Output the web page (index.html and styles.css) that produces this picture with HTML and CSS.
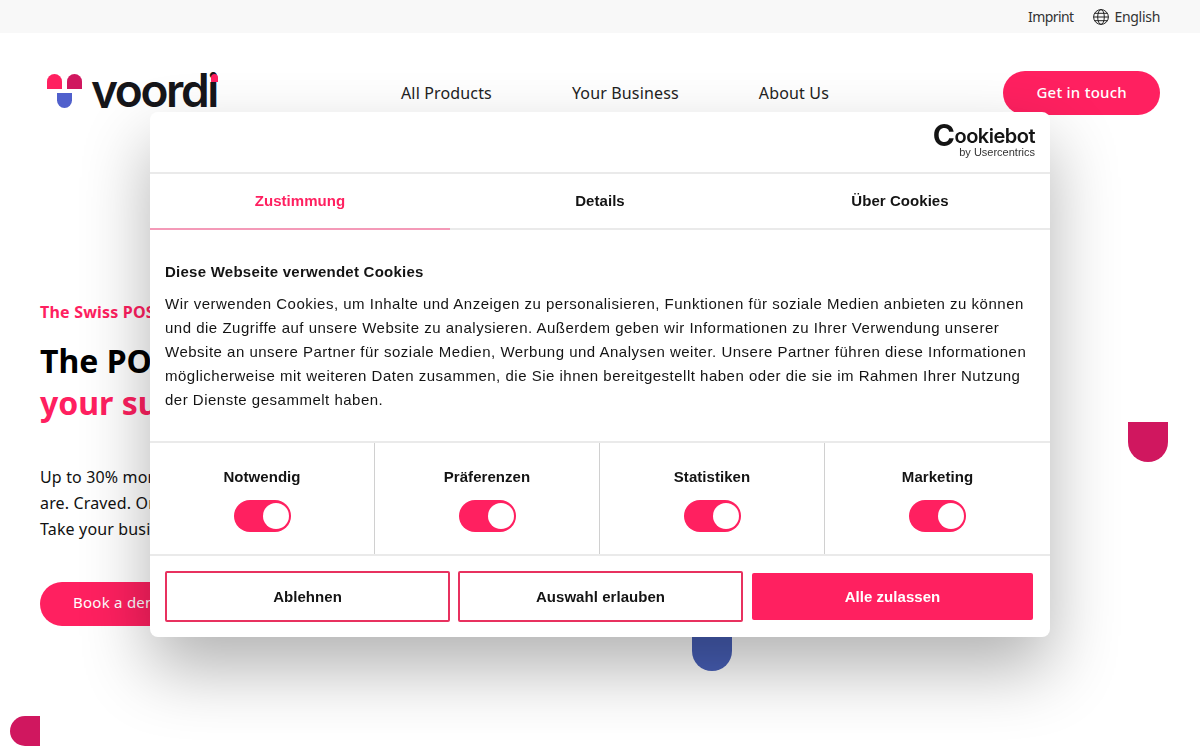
FILE: index.html
```html
<!DOCTYPE html>
<html lang="en">

<head>
    <meta charset="UTF-8">
    <meta name="viewport" content="width=device-width, initial-scale=1.0">
    <title>yoordi</title>
    <link rel="stylesheet" href="styles.css">
</head>

<body>
    <div class="topbar">
        <a class="imprint">Imprint</a>
        <a class="lang">
            <svg class="globe" viewBox="0 0 16 16" width="16" height="16">
                <circle cx="8" cy="8" r="7.4" />
                <ellipse cx="8" cy="8" rx="3.3" ry="7.4" />
                <path d="M.6 8h14.8M1.7 4.3h12.6M1.7 11.7h12.6" />
            </svg>
            English
        </a>
    </div>

    <header class="header">
        <div class="logo">
            <div class="logo-mark">
                <span class="mark mark-left"></span>
                <span class="mark mark-right"></span>
                <span class="mark mark-bottom"></span>
            </div>
            <span class="logo-name">yoordi</span>
            <span class="logo-dot"></span>
        </div>
        <nav class="nav">
            <a>All Products</a>
            <a>Your Business</a>
            <a>About Us</a>
        </nav>
        <a class="btn">Get in touch</a>
    </header>

    <section class="hero">
        <p class="eyebrow">The Swiss POS</p>
        <h1>The POS for<br><span>your success</span></h1>
        <p class="lead">Up to 30% more sales<br>are. Craved. Ordered.<br>Take your business</p>
        <a class="btn btn-demo">Book a demo</a>
    </section>

    <span class="shape shape-right"></span>
    <span class="shape shape-blue"></span>
    <span class="shape shape-corner"></span>

    <div class="dialog">
        <div class="dialog-head">
            <div class="cookiebot">
                <span class="cb-name"><span class="cb-c">C</span>ookiebot</span>
                <span class="cb-by">by Usercentrics</span>
            </div>
        </div>

        <div class="tabs">
            <div class="tab active">Zustimmung</div>
            <div class="tab">Details</div>
            <div class="tab">Über Cookies</div>
        </div>

        <div class="dialog-body">
            <h2>Diese Webseite verwendet Cookies</h2>
            <p>Wir verwenden Cookies, um Inhalte und Anzeigen zu personalisieren, Funktionen für soziale Medien anbieten zu können und die Zugriffe auf unsere Website zu analysieren. Außerdem geben wir Informationen zu Ihrer Verwendung unserer Website an unsere Partner für soziale Medien, Werbung und Analysen weiter. Unsere Partner führen diese Informationen möglicherweise mit weiteren Daten zusammen, die Sie ihnen bereitgestellt haben oder die sie im Rahmen Ihrer Nutzung der Dienste gesammelt haben.</p>
        </div>

        <div class="prefs">
            <div class="pref"><strong>Notwendig</strong><span class="toggle"></span></div>
            <div class="pref"><strong>Präferenzen</strong><span class="toggle"></span></div>
            <div class="pref"><strong>Statistiken</strong><span class="toggle"></span></div>
            <div class="pref"><strong>Marketing</strong><span class="toggle"></span></div>
        </div>

        <div class="actions">
            <button class="outline">Ablehnen</button>
            <button class="outline">Auswahl erlauben</button>
            <button class="solid">Alle zulassen</button>
        </div>
    </div>
</body>

</html>
```

FILE: styles.css
```css
* {
    margin: 0;
    padding: 0;
    box-sizing: border-box;
}

body {
    background: #fff;
    color: #111;
    font-family: "Noto Sans", "Open Sans", sans-serif;
    height: 750px;
    overflow: hidden;
}

.topbar {
    height: 33px;
    background: #f8f8f8;
    display: flex;
    justify-content: flex-end;
    align-items: center;
    gap: 20px;
    padding-right: 40px;
    font-size: 14px;
    letter-spacing: -0.3px;
    color: #333;
}

.imprint {
    letter-spacing: -0.6px;
}

.lang {
    display: flex;
    align-items: center;
    gap: 5px;
}

.globe {
    fill: none;
    stroke: #222;
    stroke-width: 1;
}

.header {
    display: flex;
    align-items: center;
    height: 44px;
    padding: 0 40px 0 47px;
    margin-top: 38px;
}

.logo {
    position: relative;
    display: flex;
    align-items: flex-start;
    width: 171px;
    flex: none;
    height: 34px;
    margin-bottom: 4px;
}

.logo-mark {
    position: relative;
    width: 36px;
    height: 34px;
    flex: none;
}

.mark {
    position: absolute;
    width: 15px;
    height: 15px;
}

.mark-left {
    left: 0;
    top: 0;
    background: #ff2060;
    border-radius: 8px 8px 0 0;
}

.mark-right {
    left: 20px;
    top: 0;
    background: #d0175f;
    border-radius: 8px 8px 0 0;
}

.mark-bottom {
    left: 10px;
    top: 19px;
    background: #5060cc;
    border-radius: 0 0 8px 8px;
}

/* clipped at the baseline: the y of the wordmark has no descender */
.logo-name {
    display: block;
    flex: none;
    height: 40px;
    margin: -6px 0 0 8px;
    overflow: hidden;
    font-family: "Inter", sans-serif;
    font-weight: 600;
    font-size: 46px;
    line-height: 45px;
    letter-spacing: -2.4px;
    color: #16161a;
}

.logo-dot {
    position: absolute;
    right: 0;
    top: 0;
    width: 7px;
    height: 8px;
    background: #ff2060;
    border-radius: 4px 4px 0 0;
}

.nav {
    display: flex;
    gap: 80px;
    margin-left: 183px;
    font-size: 16px;
    letter-spacing: 0.15px;
    color: #222;
}

.btn {
    display: inline-flex;
    align-items: center;
    justify-content: center;
    height: 44px;
    padding: 0 33px 2px;
    border-radius: 22px;
    background: #ff2060;
    color: #fff;
    font-size: 15px;
    font-weight: 500;
    letter-spacing: 0.25px;
    margin-left: auto;
}

.hero {
    width: 560px;
    padding: 186px 0 0 40px;
}

.eyebrow {
    color: #ff2060;
    font-size: 16px;
    font-weight: 700;
    line-height: 22px;
    letter-spacing: 0.2px;
}

.hero h1 {
    font-size: 32px;
    line-height: 42px;
    margin-top: 17px;
    color: #000;
}

.hero h1 span {
    color: #ff2060;
}

.lead {
    font-size: 16px;
    line-height: 26px;
    margin-top: 40px;
    letter-spacing: 0.15px;
}

.btn-demo {
    margin: 40px 0 0;
    padding-bottom: 4px;
    font-weight: 400;
}

.shape {
    position: absolute;
    background: #d0175f;
}

.shape-right {
    left: 1128px;
    top: 422px;
    width: 40px;
    height: 40px;
    border-radius: 0 0 20px 20px;
}

.shape-blue {
    left: 692px;
    top: 600px;
    width: 40px;
    height: 71px;
    background: #4860b8;
    border-radius: 0 0 20px 20px;
}

.shape-corner {
    left: 10px;
    top: 716px;
    width: 30px;
    height: 30px;
    border-radius: 15px 0 0 15px;
}

.dialog {
    position: fixed;
    left: 150px;
    top: 112px;
    width: 900px;
    height: 525px;
    background: #fff;
    border-radius: 8px;
    box-shadow: 0 32px 68px rgba(0, 0, 0, 0.3);
    display: flex;
    flex-direction: column;
    font-family: "Liberation Sans", Arial, sans-serif;
    font-size: 15px;
    letter-spacing: 0.05px;
    color: #141414;
}

.dialog-head {
    height: 62px;
    flex: none;
    border-bottom: 2px solid #eaeaea;
    display: flex;
    justify-content: flex-end;
    padding: 14px 15px 0 0;
}

.cookiebot {
    display: flex;
    flex-direction: column;
    align-items: flex-end;
    color: #141414;
}

.cb-name {
    font-family: "Inter", sans-serif;
    font-size: 20px;
    font-weight: 600;
    line-height: 21px;
    letter-spacing: -0.5px;
}

.cb-c {
    font-size: 30px;
    font-weight: 700;
    line-height: 10px;
    vertical-align: -3px;
}

.cb-by {
    font-size: 11px;
    line-height: 10px;
    letter-spacing: 0;
    color: #333;
}

.tabs {
    display: flex;
    height: 56px;
    flex: none;
    border-bottom: 2px solid #eaeaea;
}

.tab {
    flex: 1;
    display: flex;
    align-items: center;
    justify-content: center;
    font-weight: 700;
    margin-bottom: -2px;
    padding-bottom: 1px;
    border-bottom: 2px solid transparent;
}

.tab.active {
    color: #ff2060;
    border-bottom-color: #f49ab8;
}

.dialog-body {
    height: 211px;
    flex: none;
    padding: 30px 15px 0;
    letter-spacing: 0.5px;
    line-height: 24px;
}

.dialog-body h2 {
    font-size: 15px;
    line-height: 24px;
    letter-spacing: 0.25px;
    margin-bottom: 8px;
}

.prefs {
    display: flex;
    height: 115px;
    flex: none;
    border-top: 2px solid #eaeaea;
    border-bottom: 2px solid #eaeaea;
}

.pref {
    width: 225px;
    flex: none;
    display: flex;
    flex-direction: column;
    align-items: center;
    padding-top: 25px;
    border-right: 1px solid #d0d0d0;
}

.pref:last-child {
    border-right: 0;
}

.toggle {
    position: relative;
    display: block;
    width: 57px;
    height: 32px;
    margin-top: 15px;
    border-radius: 16px;
    background: #ff2060;
}

.toggle::after {
    content: "";
    position: absolute;
    right: 2px;
    top: 3px;
    width: 26px;
    height: 26px;
    border-radius: 50%;
    background: #fff;
}

.actions {
    display: flex;
    gap: 8px;
    padding: 15px 17px 0 15px;
}

.actions button {
    flex: 1;
    height: 51px;
    border-radius: 2px;
    background: #fff;
    font-family: inherit;
    font-size: 15px;
    font-weight: 700;
    letter-spacing: inherit;
    color: #141414;
}

.outline {
    border: 2px solid #e8315f;
}

.actions .solid {
    height: 47px;
    margin: 2px 0 0 1px;
    border: 0;
    background: #ff2060;
    color: #fff;
}
```
